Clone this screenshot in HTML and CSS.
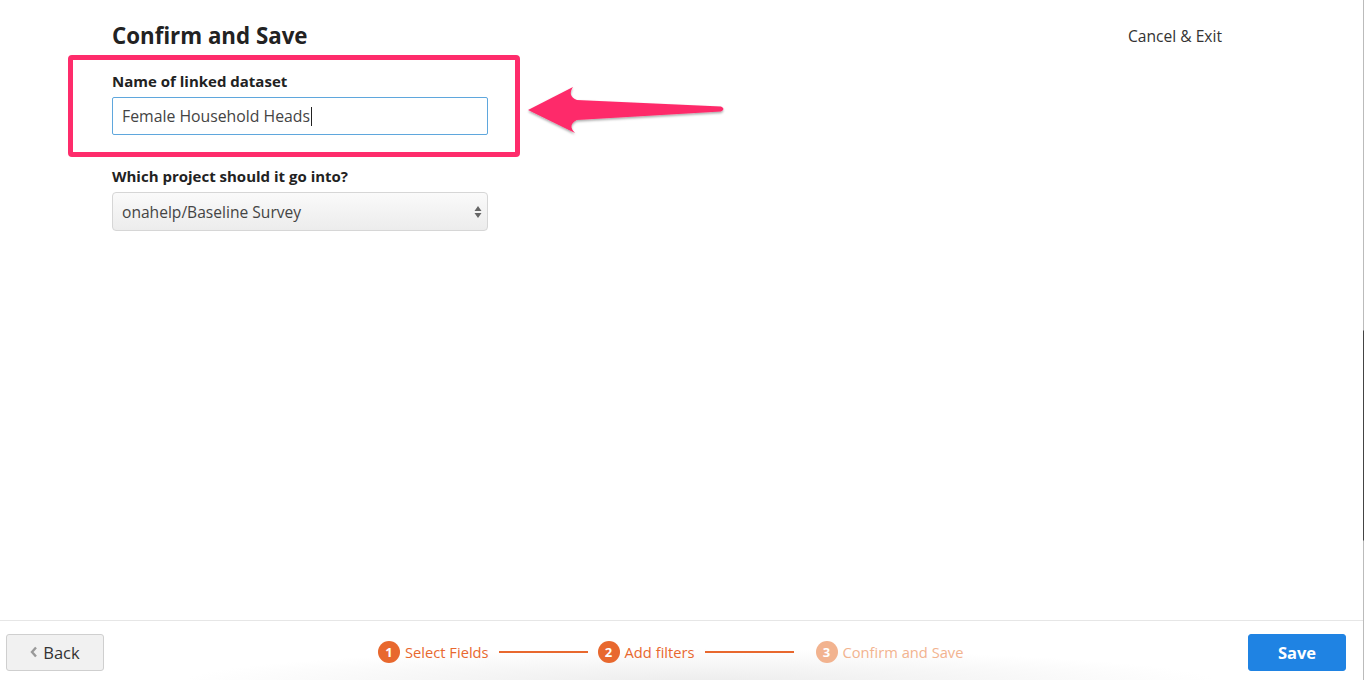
FILE: index.html
```html
<!DOCTYPE html>
<html lang="en">
<head>
<meta charset="utf-8">
<title>Confirm and Save</title>
<link rel="stylesheet" href="styles.css">
</head>
<body>
<div class="page">
  <main class="main">
    <header class="topbar">
      <h1 class="title">Confirm and Save</h1>
      <a class="cancel" href="#">Cancel &amp; Exit</a>
    </header>
    <form class="form">
      <div class="group">
        <label class="label" for="name">Name of linked dataset</label>
        <div class="input"><span>Female Household Heads</span><span class="caret"></span></div>
      </div>
      <div class="group">
        <label class="label">Which project should it go into?</label>
        <div class="select">
          <span>onahelp/Baseline Survey</span>
          <svg class="updown" width="8" height="14" viewBox="0 0 8 14"><path d="M4 1 L7.5 6 L0.5 6 Z M4 13 L7.5 8 L0.5 8 Z" fill="#666"/></svg>
        </div>
      </div>
    </form>
  </main>
  <footer class="footer">
    <button class="btn back" type="button"><svg width="8" height="12" viewBox="0 0 8 12"><path d="M6 1.5 L2 6 L6 10.5" fill="none" stroke="#999" stroke-width="2.4"/></svg>Back</button>
    <div class="steps">
      <div class="step"><span class="num">1</span><span class="stext">Select Fields</span></div>
      <span class="line"></span>
      <div class="step"><span class="num">2</span><span class="stext">Add filters</span></div>
      <span class="line"></span>
      <div class="step pending"><span class="num">3</span><span class="stext">Confirm and Save</span></div>
    </div>
    <button class="btn save" type="button">Save</button>
  </footer>
</div>
<div class="highlight"></div>
<svg class="arrow" width="220" height="70" viewBox="510 75 220 70">
  <defs>
    <filter id="sh" x="-10%" y="-30%" width="120%" height="160%">
      <feDropShadow dx="0" dy="1.5" stdDeviation="1.2" flood-color="#000" flood-opacity="0.35"/>
    </filter>
  </defs>
  <path filter="url(#sh)" fill="#fe2c6b" d="M528 110 L573 87 Q567 96 577 100 L721 106.5 Q726 109 721 111.5 L577 120 Q567 125 575 133 Z"/>
</svg>
<div class="edge"></div>
</body>
</html>
```
FILE: styles.css
```css
* { box-sizing: border-box; }
html, body { margin: 0; padding: 0; }
body {
  font-family: "Open Sans", Lato, "Liberation Sans", sans-serif;
  color: #222;
  background: #fff;
  width: 1364px;
  height: 680px;
  overflow: hidden;
  position: relative;
}
.page {
  display: flex;
  flex-direction: column;
  height: 680px;
}
.main {
  flex: 1;
  padding: 21px 142px 0 112px;
}
.topbar {
  display: flex;
  justify-content: space-between;
  align-items: center;
  height: 30px;
}
.title {
  margin: 0;
  font-size: 22.3px;
  line-height: 30px;
  font-weight: 700;
  color: #222;
}
.cancel {
  font-size: 15.6px;
  color: #333;
  text-decoration: none;
  margin-top: -1px;
}
.form {
  margin-top: 20px;
  width: 376px;
}
.group { display: flex; flex-direction: column; }
.group + .group { margin-top: 31px; }
.label {
  font-size: 15px;
  line-height: 20px;
  font-weight: 700;
  color: #222;
  margin-bottom: 6px;
}
.input {
  height: 38px;
  border: 1px solid #5fa7dd;
  border-radius: 2px;
  padding: 0 9px;
  display: flex;
  align-items: center;
  font-size: 15.8px;
  color: #444;
}
.caret {
  display: inline-block;
  width: 1px;
  height: 19px;
  background: #222;
  margin-left: 1px;
}
.select {
  height: 39px;
  border: 1px solid #d6d6d6;
  border-radius: 4px;
  background: linear-gradient(#fafafa, #ececec);
  padding: 0 5px 0 9px;
  display: flex;
  align-items: center;
  justify-content: space-between;
  font-size: 15.6px;
  color: #444;
}
.footer {
  height: 60px;
  border-top: 1px solid #e6e6e6;
  display: flex;
  align-items: center;
  justify-content: space-between;
  padding: 3px 18px 0 6px;
  background: radial-gradient(ellipse 520px 34px at 700px 62px, #ececec, rgba(255,255,255,0) 100%), #fff;
}
.btn {
  font-family: inherit;
  height: 37px;
  width: 98px;
  border-radius: 3px;
  font-size: 16.5px;
  cursor: pointer;
  display: flex;
  align-items: center;
  justify-content: center;
  gap: 5px;
}
.back {
  background: #f1f1f1;
  border: 1px solid #cfcfcf;
  color: #333;
}
.save {
  background: #1f83e3;
  border: 1px solid #1f83e3;
  color: #fff;
  font-weight: 700;
}
.steps {
  display: flex;
  align-items: center;
  margin-left: 274px;
  flex: 1;
}
.step {
  display: flex;
  align-items: center;
  gap: 5px;
  color: #e8682e;
  font-size: 14.7px;
}
.num {
  width: 22px;
  height: 22px;
  border-radius: 50%;
  background: #e8682e;
  color: #fff;
  font-weight: 700;
  font-size: 13px;
  display: flex;
  align-items: center;
  justify-content: center;
}
.pending { color: #f2b38f; margin-left: 12px; }
.pending .num { background: #f2b38f; }
.line {
  width: 89px;
  height: 2px;
  background: #e8682e;
  margin: 0 10px;
}
.highlight {
  position: absolute;
  left: 68px;
  top: 55px;
  width: 452px;
  height: 102px;
  border: 5px solid #fe2c6b;
  border-radius: 4px;
}
.arrow {
  position: absolute;
  left: 510px;
  top: 75px;
}
.edge {
  position: absolute;
  right: 0;
  top: 0;
  width: 1px;
  height: 680px;
  background: linear-gradient(#bbb 0, #bbb 330px, #444 331px, #444 540px, #bbb 541px, #bbb 100%);
}
```
